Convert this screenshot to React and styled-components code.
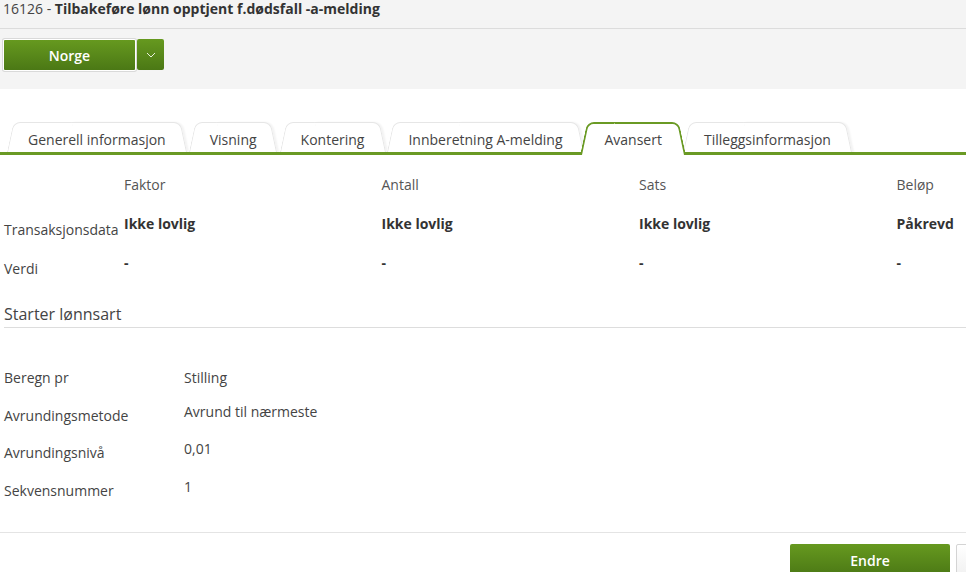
import React from 'react';
import styled, { createGlobalStyle } from 'styled-components';

const GlobalStyle = createGlobalStyle`
  body {
    margin: 0;
    background: #fff;
    font-family: 'Open Sans', 'Liberation Sans', sans-serif;
    font-size: 14px;
    color: #444;
    overflow: hidden;
  }
`;

const green = '#6a9a24';

const Page = styled.div`
  width: 1040px;
`;

const TitleBar = styled.div`
  background: #f4f4f4;
  height: 28px;
  border-bottom: 1px solid #dcdcdc;
  padding: 0 3px;
  line-height: 18px;
  color: #444;

  strong {
    color: #333;
    font-weight: 700;
  }
`;

const Toolbar = styled.div`
  background: #f4f4f4;
  height: 60px;
  box-sizing: border-box;
  padding: 11px 4px 0;
  display: flex;
  align-items: flex-start;
`;

const GreenButton = styled.button`
  border: none;
  background: linear-gradient(#66991f, #4b7815);
  color: #fff;
  font-family: inherit;
  font-size: 14px;
  font-weight: 600;
  width: ${(p) => p.width}px;
  height: ${(p) => p.height}px;
  border-radius: ${(p) => p.radius || '2px'};
  padding: 0;
  cursor: pointer;
`;

const MainButton = styled(GreenButton)`
  box-shadow: 0 0 0 1px #fff, 0 0 0 2px #d9d9d9;
  border-radius: 1px;
`;

const CaretButton = styled(GreenButton)`
  margin: -1px 0 0 2px;
  display: flex;
  align-items: center;
  justify-content: center;
`;

const TabBar = styled.div`
  margin-top: 33px;
  display: flex;
  gap: 2px;
  padding-left: 7px;
  border-bottom: 3px solid ${green};
`;

const Tab = styled.div`
  position: relative;
  z-index: ${(p) => (p.active ? 2 : 1)};
  height: 30px;
  box-sizing: border-box;
  margin: ${(p) => (p.active ? '0 -5px' : '0')};
  padding: ${(p) => (p.active ? '8px 24px 0' : '8px 21px 0')};
  line-height: 20px;
  color: #444;
  white-space: nowrap;
  cursor: pointer;

  &::before,
  &::after {
    content: '';
    position: absolute;
    top: 0;
    bottom: ${(p) => (p.active ? '-3px' : '0')};
    width: 60%;
    background: #fff;
    z-index: -1;
    border: ${(p) => (p.active ? `2px solid ${green}` : '1px solid #e6e6e6')};
    border-bottom: none;
  }

  &::before {
    left: 0;
    border-right: none;
    border-radius: 7px 0 0 0;
    transform: skewX(-12deg);
    transform-origin: bottom left;
  }

  &::after {
    right: 0;
    border-left: none;
    border-radius: 0 7px 0 0;
    transform: skewX(12deg);
    transform-origin: bottom right;
    box-shadow: ${(p) => (p.active ? 'none' : '2px 0 2px rgba(0,0,0,0.05)')};
  }
`;

const Grid = styled.div`
  margin-top: 20px;
  padding-left: 4px;
  display: grid;
  grid-template-columns: 120px repeat(4, 257.5px);
  grid-auto-rows: 39px;
  line-height: 20px;
`;

const ColHead = styled.div`
  color: #555;
`;

const RowLabel = styled.div`
  padding-top: 6px;
  color: #444;
  white-space: nowrap;
`;

const Value = styled.div`
  font-weight: 700;
  color: #333;
`;

const SectionTitle = styled.div`
  margin: 11px 0 0 4px;
  font-size: 16px;
  line-height: 22px;
  padding-bottom: 2px;
  border-bottom: 1px solid #dddddd;
  color: #444;
`;

const Details = styled.div`
  padding: 40px 4px 14px;
  display: grid;
  grid-template-columns: 180px 1fr;
  grid-auto-rows: 37.5px;
  line-height: 20px;
`;

const DetailLabel = styled.div`
  color: #444;
`;

const DetailValue = styled.div`
  color: #444;
  margin-top: ${(p) => (p.raise ? '-4px' : '0')};
`;

const Footer = styled.div`
  border-top: 1px solid #e4e4e4;
  padding: 11px 14px 0 0;
  display: flex;
  justify-content: flex-end;
  gap: 6px;
`;

const PlainButton = styled.button`
  width: 70px;
  height: 32px;
  border: 1px solid #d4d4d4;
  border-radius: 2px;
  background: linear-gradient(#fff, #f1f1f1);
`;

const tabs = [
  'Generell informasjon',
  'Visning',
  'Kontering',
  'Innberetning A-melding',
  'Avansert',
  'Tilleggsinformasjon',
];

const columns = [
  { head: 'Faktor', data: 'Ikke lovlig' },
  { head: 'Antall', data: 'Ikke lovlig' },
  { head: 'Sats', data: 'Ikke lovlig' },
  { head: 'Beløp', data: 'Påkrevd' },
];

const details = [
  ['Beregn pr', 'Stilling'],
  ['Avrundingsmetode', 'Avrund til nærmeste'],
  ['Avrundingsnivå', '0,01'],
  ['Sekvensnummer', '1'],
];

const App = () => (
  <Page>
    <GlobalStyle />
    <TitleBar>
      16126 - <strong>Tilbakeføre lønn opptjent f.dødsfall -a-melding</strong>
    </TitleBar>
    <Toolbar>
      <MainButton width={131} height={30}>
        Norge
      </MainButton>
      <CaretButton width={27} height={31}>
        <svg width="10" height="6" viewBox="0 0 10 6">
          <polyline points="1,1 5,5 9,1" fill="none" stroke="#e8f0dc" strokeWidth="1" />
        </svg>
      </CaretButton>
    </Toolbar>
    <TabBar>
      {tabs.map((t) => (
        <Tab key={t} active={t === 'Avansert'}>
          {t}
        </Tab>
      ))}
    </TabBar>
    <Grid>
      <div />
      {columns.map((c) => (
        <ColHead key={c.head}>{c.head}</ColHead>
      ))}
      <RowLabel>Transaksjonsdata</RowLabel>
      {columns.map((c) => (
        <Value key={c.head}>{c.data}</Value>
      ))}
      <RowLabel>Verdi</RowLabel>
      {columns.map((c) => (
        <Value key={c.head}>-</Value>
      ))}
    </Grid>
    <SectionTitle>Starter lønnsart</SectionTitle>
    <Details>
      {details.map(([label, value], i) => (
        <React.Fragment key={label}>
          <DetailLabel>{label}</DetailLabel>
          <DetailValue raise={i > 0}>{value}</DetailValue>
        </React.Fragment>
      ))}
    </Details>
    <Footer>
      <GreenButton width={160} height={32}>
        Endre
      </GreenButton>
      <PlainButton aria-label="Avbryt" />
    </Footer>
  </Page>
);

export default App;
